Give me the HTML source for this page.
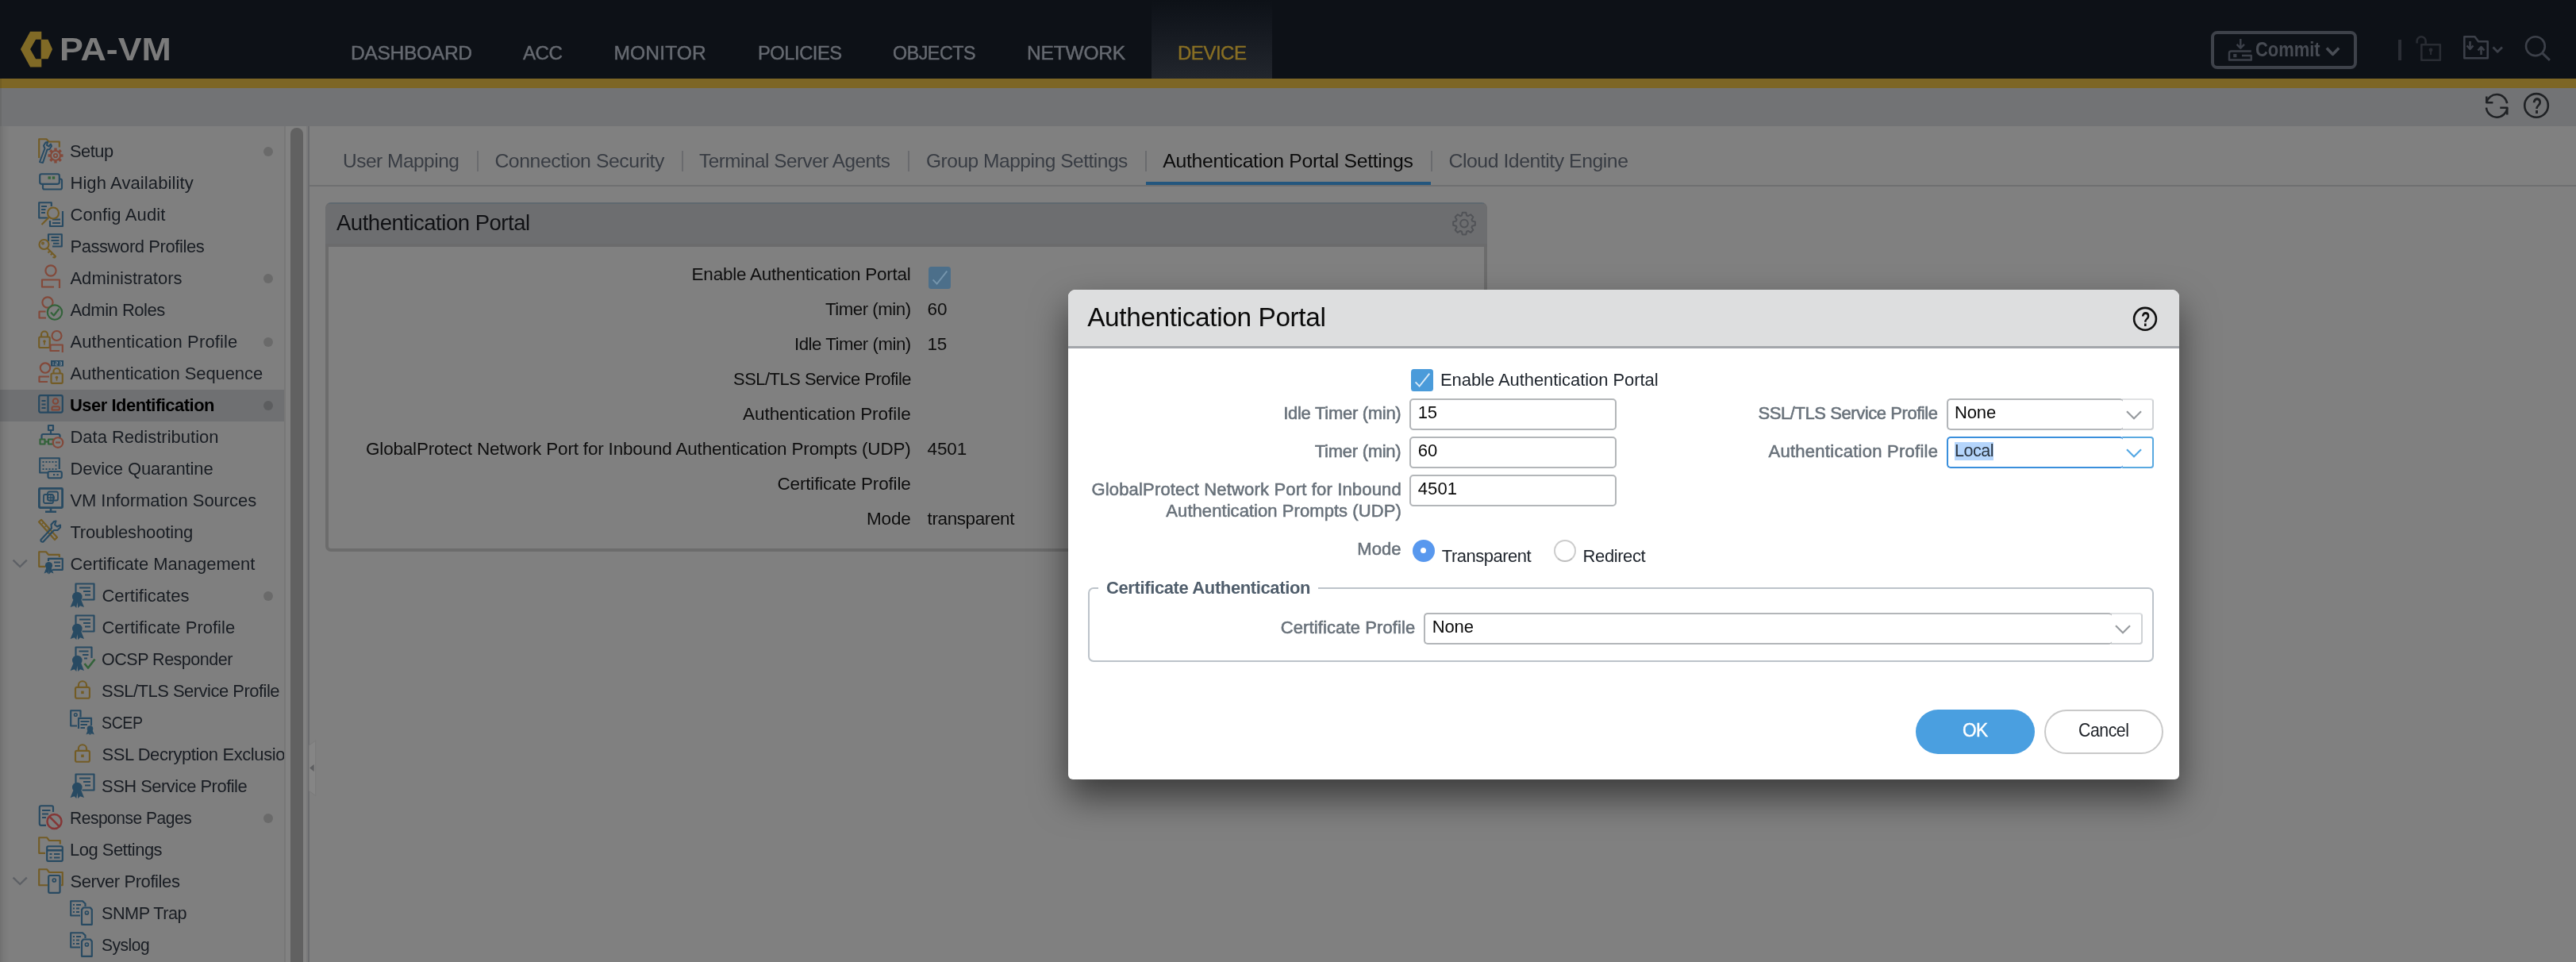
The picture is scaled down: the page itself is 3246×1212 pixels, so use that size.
<!DOCTYPE html>
<html><head><meta charset="utf-8"><title>PA-VM</title><style>
html,body{margin:0;padding:0}
body{width:3246px;height:1212px;position:relative;overflow:hidden;background:#808080;font-family:"Liberation Sans",sans-serif;}
.t{position:absolute;white-space:pre;}
.a{position:absolute;}
svg{position:absolute;overflow:visible}
#root{position:absolute;left:0;top:0;width:3246px;height:1212px;will-change:transform;}
</style></head><body>
<div id="root">
<div class="a" style="left:0px;top:0px;width:3246px;height:99px;background:#0d1117"></div>
<div class="a" style="left:1451px;top:0px;width:152px;height:99px;background:linear-gradient(#0d1117 0%,#14181f 35%,#22262d 100%)"></div>
<div class="a" style="left:0px;top:99px;width:3246px;height:12px;background:#7d6625"></div>
<div class="a" style="left:0px;top:111px;width:3246px;height:48px;background:#727375"></div>
<svg style="left:0;top:0" width="240" height="99"><g fill="#806a26"><polygon points="25.9,62.1 38.1,39.8 52.3,39.8 52.3,49.7 45.1,49.7 38.1,62.1 45.1,74.3 52.3,74.3 52.3,84.4 38.1,84.4"/><polygon points="51.6,49.7 60.5,49.7 66.1,62.1 60.5,74.3 51.6,74.3"/></g></svg>
<div class="t" style="left:75.30px;top:36px;font-size:40.5px;line-height:52px;color:#7b7b7b;font-weight:700;transform:scaleX(1.105);transform-origin:0 50%;">PA-VM</div>
<div class="t" style="left:441.90px;top:51px;font-size:24.6px;line-height:31px;color:#666a71;letter-spacing:-0.322px;-webkit-text-stroke:0.45px;">DASHBOARD</div>
<div class="t" style="left:659.40px;top:51px;font-size:24.6px;line-height:31px;color:#666a71;letter-spacing:-0.500px;transform:scaleX(0.9814);transform-origin:0 50%;-webkit-text-stroke:0.45px;">ACC</div>
<div class="t" style="left:773.50px;top:51px;font-size:24.6px;line-height:31px;color:#666a71;letter-spacing:0.116px;-webkit-text-stroke:0.45px;">MONITOR</div>
<div class="t" style="left:955.00px;top:51px;font-size:24.6px;line-height:31px;color:#666a71;letter-spacing:-0.500px;transform:scaleX(0.9648);transform-origin:0 50%;-webkit-text-stroke:0.45px;">POLICIES</div>
<div class="t" style="left:1125.00px;top:51px;font-size:24.6px;line-height:31px;color:#666a71;letter-spacing:-0.500px;transform:scaleX(0.9461);transform-origin:0 50%;-webkit-text-stroke:0.45px;">OBJECTS</div>
<div class="t" style="left:1294.00px;top:51px;font-size:24.6px;line-height:31px;color:#666a71;letter-spacing:-0.243px;-webkit-text-stroke:0.45px;">NETWORK</div>
<div class="t" style="left:1483.50px;top:51px;font-size:24.6px;line-height:31px;color:#886f24;letter-spacing:-0.500px;transform:scaleX(0.9765);transform-origin:0 50%;-webkit-text-stroke:0.45px;">DEVICE</div>
<div class="a" style="left:2786.2px;top:38.9px;width:183.9px;height:48.2px;box-sizing:border-box;border:4px solid #3e424a;border-radius:8px"></div>
<div class="t" style="left:2841.50px;top:46px;font-size:25.6px;line-height:32px;color:#474b53;font-weight:700;transform:scaleX(0.857);transform-origin:0 50%;">Commit</div>
<svg style="left:2806px;top:46px" width="36" height="34"><g fill="none" stroke="#3c4049" stroke-width="2.6" stroke-linejoin="round"><path d="M17.3,3 V14.5 M12.6,9.8 L17.3,14.7 L22,9.8" stroke-width="2.4"/><path d="M30.8,18.5 H5.5 a2.5,2.5 0 0 0 -2.5,2.5 V29.6 H30.8 V24 H19" stroke-width="2.5"/></g><rect x="8.2" y="22" width="4.2" height="4.2" fill="#3c4049"/></svg><svg style="left:2929px;top:58px" width="22" height="16"><g fill="none" stroke="#4a4e56" stroke-width="2.6" stroke-linejoin="round"><path d="M2.8,2.6 L10.5,10.4 L18.2,2.6" stroke-width="3.5"/></g></svg><div class="a" style="left:3022.2px;top:50px;width:3.8px;height:26px;background:#2b2e35"></div><svg style="left:3042px;top:43px" width="36" height="36"><g fill="none" stroke="#292c33" stroke-width="2.6" stroke-linejoin="round"><rect x="9.3" y="13.3" width="23.5" height="19.5"/><path d="M3.6,11.5 V8.8 a5.5,5.5 0 0 1 11,0 V13"/></g><circle cx="21" cy="20" r="2.4" fill="#292c33"/><rect x="20" y="20" width="2" height="6" fill="#292c33"/></svg><svg style="left:3102px;top:43px" width="56" height="36"><g fill="none" stroke="#3c4049" stroke-width="2.6" stroke-linejoin="round"><path d="M3.3,30.3 V3.3 H16.5 L21,9.3 H32.7 V30.3 Z"/><path d="M10.5,9 V18.5 M6.5,14.5 L10.5,18.8 L14.5,14.5 M24.5,26 V16.5 M20.5,20.5 L24.5,16.2 L28.5,20.5" stroke-width="2.5"/><path d="M39.5,16.5 L45.2,22.3 L51,16.5" stroke-width="2.8"/></g></svg><svg style="left:3180px;top:43px" width="36" height="36"><g fill="none" stroke="#3c4049" stroke-width="2.6" stroke-linejoin="round"><circle cx="14.9" cy="15.2" r="11.9"/><path d="M23.3,23.6 L32.9,32.8" stroke-width="3"/></g></svg><svg style="left:3129px;top:117px" width="34" height="34"><g fill="none" stroke="#1f2124" stroke-width="2.5" stroke-linejoin="round"><path d="M4.3,4.6 V12.3 H12.4"/><path d="M4.3,12.3 A13.2,13.2 0 0 1 30.2,13.2"/><path d="M21.3,18.7 H30.3 V27.5"/><path d="M30.3,18.7 A13.2,13.2 0 0 1 4.0,18.6"/></g></svg><svg style="left:3178px;top:115px" width="36" height="36"><g fill="none" stroke="#1f2124" stroke-width="2.6" stroke-linejoin="round"><circle cx="18.05" cy="17.9" r="14.8"/></g><text transform="translate(18.9,28) scale(0.71,1)" text-anchor="middle" font-family="Liberation Sans, sans-serif" font-weight="700" font-size="28.7" fill="#1f2124">?</text></svg>
<div class="a" style="left:0px;top:159px;width:358px;height:1053px;background:#7f7f7f"></div>
<div class="a" style="left:358px;top:159px;width:2px;height:1053px;background:#777"></div>
<div class="a" style="left:360px;top:159px;width:26px;height:1053px;background:#828282"></div>
<div class="a" style="left:386px;top:159px;width:2px;height:1053px;background:#7a7a7a"></div>
<div class="a" style="left:388px;top:159px;width:2px;height:1053px;background:#6b6c6f"></div>
<div class="a" style="left:366px;top:160.5px;width:16px;height:1070px;background:#616161;border-radius:8px"></div>
<svg style="left:388px;top:930px" width="12" height="76"><path d="M1.5,9 L9.8,3 V72.5 L1.5,66.5 Z" fill="#858585" stroke="#7a7a7a" stroke-width="1"/><polygon points="2.2,37.5 7.6,33 7.6,42" fill="#5e5f61"/></svg>
<div class="a" style="left:0px;top:491px;width:358px;height:40px;background:#6f7072"></div>
<div class="a" style="left:0;top:159px;width:358px;height:1053px;overflow:hidden">
<div class="t" style="left:88.40px;top:17px;font-size:22px;line-height:29px;color:#191d23;letter-spacing:-0.500px;transform:scaleX(0.9927);transform-origin:0 50%;">Setup</div>
<svg style="left:48px;top:15px" width="32" height="32" viewBox="0 0 32 32" opacity="0.86"><g fill="none" stroke="#725718" stroke-width="2.15" stroke-linejoin="round" stroke-linecap="butt"><path d="M1.2,25 V1.2 H10.5 L13.5,4.5 H26.8 V11.5"/></g><g fill="none" stroke="#1a425e" stroke-width="2" stroke-linejoin="round" stroke-linecap="butt"><path d="M2,30 L8.5,13 L7,9.5 L9.5,5.5 L12,5 L11,9 L13.5,10.5 L16,7.5 L17,10 L14.5,14 L11.5,14.5 L6,31 Z" /></g><g fill="none" stroke="#84402f" stroke-width="2.15" stroke-linejoin="round" stroke-linecap="butt"><circle cx="22" cy="22" r="6"/><circle cx="22" cy="22" r="2.2" stroke-width="1.8"/><path d="M22,12.5 V15.5 M22,28.5 V31.5 M12.5,22 H15.5 M28.5,22 H31.5 M15.3,15.3 L17.4,17.4 M26.6,26.6 L28.7,28.7 M15.3,28.7 L17.4,26.6 M26.6,17.4 L28.7,15.3" stroke-width="3.4"/></g></svg>
<div class="a" style="left:332px;top:26.19999999999999px;width:12px;height:12px;border-radius:6px;background:rgba(0,0,0,.165)"></div>
<div class="t" style="left:88.40px;top:57px;font-size:22px;line-height:29px;color:#191d23;letter-spacing:0.101px;">High Availability</div>
<svg style="left:48px;top:55px" width="32" height="32" viewBox="0 0 32 32" opacity="0.86"><g fill="none" stroke="#1a425e" stroke-width="2.15" stroke-linejoin="round" stroke-linecap="butt"><path d="M27,11.5 H28 a2,2 0 0 1 2,2 V22.5 a2,2 0 0 1 -2,2 H8 a2,2 0 0 1 -2,-2 V18"/><rect x="2.2" y="5.2" width="24.6" height="12.6" rx="2.2"/></g><rect x="12.5" y="8.3" width="3.4" height="3.4" fill="#275e2f"/><rect x="17.8" y="8.3" width="3.4" height="3.4" fill="#275e2f"/></svg>
<div class="t" style="left:88.40px;top:97px;font-size:22px;line-height:29px;color:#191d23;letter-spacing:0.122px;">Config Audit</div>
<svg style="left:48px;top:95px" width="32" height="32" viewBox="0 0 32 32" opacity="0.86"><g fill="none" stroke="#1a425e" stroke-width="2.15" stroke-linejoin="round" stroke-linecap="butt"><path d="M12,20.5 H1.2 V1.2 H16.8 V6"/><path d="M4,6 H11 M4,10 H9.5 M4,14 H9" stroke-width="2"/><path d="M31,12 V31 H15 V24"/><path d="M18,22.5 H28 M18,27 H28" stroke-width="2"/></g><g fill="none" stroke="#725718" stroke-width="2.15" stroke-linejoin="round" stroke-linecap="butt"><circle cx="19" cy="14.5" r="7"/><path d="M14,19.5 L4.5,29"/></g></svg>
<div class="t" style="left:88.40px;top:137px;font-size:22px;line-height:29px;color:#191d23;letter-spacing:-0.422px;">Password Profiles</div>
<svg style="left:48px;top:135px" width="32" height="32" viewBox="0 0 32 32" opacity="0.86"><g fill="none" stroke="#1a425e" stroke-width="2.15" stroke-linejoin="round" stroke-linecap="butt"><path d="M13,10 V1.2 H29.8 V16.5 H18"/><path d="M16.5,5 H26.5 M16.5,9 H26.5 M19,12.8 H26.5" stroke-width="2"/></g><g fill="none" stroke="#725718" stroke-width="2.15" stroke-linejoin="round" stroke-linecap="butt"><circle cx="7.5" cy="14" r="6"/><circle cx="6" cy="12.5" r="1.2" stroke-width="1.6"/><path d="M11.5,18.5 L22,29 L21,30.5 L18.5,30 M15,22 L12.5,24.5 M18,25 L15.8,27.2"/></g></svg>
<div class="t" style="left:88.40px;top:177px;font-size:22px;line-height:29px;color:#191d23;letter-spacing:0.043px;">Administrators</div>
<svg style="left:48px;top:173px" width="32" height="32" viewBox="0 0 32 32" opacity="0.86"><g fill="none" stroke="#84402f" stroke-width="2.15" stroke-linejoin="round" stroke-linecap="butt"><circle cx="16" cy="9" r="6.6"/><path d="M20,29.5 H5 V20.5 H27 V31"/></g></svg>
<div class="a" style="left:332px;top:186.2px;width:12px;height:12px;border-radius:6px;background:rgba(0,0,0,.165)"></div>
<div class="t" style="left:88.40px;top:217px;font-size:22px;line-height:29px;color:#191d23;letter-spacing:-0.484px;">Admin Roles</div>
<svg style="left:48px;top:213px" width="32" height="32" viewBox="0 0 32 32" opacity="0.86"><g fill="none" stroke="#84402f" stroke-width="2.15" stroke-linejoin="round" stroke-linecap="butt"><circle cx="12" cy="9" r="6.6"/><path d="M10,28.5 H1.5 V20.5 H9.5"/></g><g fill="none" stroke="#275e2f" stroke-width="2.15" stroke-linejoin="round" stroke-linecap="butt"><circle cx="21" cy="21.5" r="9.2"/><path d="M16,21.5 L19.8,25.5 L26.5,17"/></g></svg>
<div class="t" style="left:88.40px;top:257px;font-size:22px;line-height:29px;color:#191d23;letter-spacing:0.145px;">Authentication Profile</div>
<svg style="left:48px;top:255px" width="32" height="32" viewBox="0 0 32 32" opacity="0.86"><g fill="none" stroke="#725718" stroke-width="2.15" stroke-linejoin="round" stroke-linecap="butt"><rect x="1.2" y="10.5" width="13.5" height="13.5" rx="1.5"/><path d="M4,10.5 V7.5 a4,4 0 0 1 8,0 V10.5"/></g><circle cx="8" cy="16" r="1.8" fill="#725718"/><rect x="7.2" y="16" width="1.6" height="4.5" fill="#725718"/><g fill="none" stroke="#84402f" stroke-width="2.15" stroke-linejoin="round" stroke-linecap="butt"><circle cx="23.5" cy="9" r="6"/><path d="M27,28 H15.5 V20.5 H30.8 V30"/></g></svg>
<div class="a" style="left:332px;top:266.2px;width:12px;height:12px;border-radius:6px;background:rgba(0,0,0,.165)"></div>
<div class="t" style="left:88.40px;top:297px;font-size:22px;line-height:29px;color:#191d23;letter-spacing:-0.084px;">Authentication Sequence</div>
<svg style="left:48px;top:293.3px" width="32" height="32" viewBox="0 0 32 32" opacity="0.86"><g fill="none" stroke="#84402f" stroke-width="2.15" stroke-linejoin="round" stroke-linecap="butt"><circle cx="9" cy="11.5" r="6.2"/><path d="M12,29 H1.5 V22.5 H14"/></g><rect x="16" y="2" width="16" height="7.5" fill="#1a425e"/><path d="M19,4 V8 M22,4 H24.5 V6 H22 V8 H24.5 M27,4 H29.5 V8 H27 M27,6 H29.5" stroke="#7f8b95" stroke-width="1" fill="none"/><g fill="none" stroke="#725718" stroke-width="2.15" stroke-linejoin="round" stroke-linecap="butt"><rect x="16.5" y="18.5" width="14.3" height="12.3" rx="1.5"/><path d="M19.5,18.5 V16 a4,4 0 0 1 8,0 V18.5"/></g><circle cx="23.5" cy="23.5" r="1.8" fill="#725718"/><rect x="22.7" y="23.5" width="1.6" height="4.2" fill="#725718"/></svg>
<div class="t" style="left:88.40px;top:337px;font-size:22px;line-height:29px;color:#000;font-weight:700;letter-spacing:-0.500px;transform:scaleX(0.9977);transform-origin:0 50%;">User Identification</div>
<svg style="left:48px;top:335px" width="32" height="32" viewBox="0 0 32 32" opacity="0.86"><g fill="none" stroke="#1a425e" stroke-width="2.15" stroke-linejoin="round" stroke-linecap="butt"><rect x="1.2" y="4.2" width="29.6" height="21.4" rx="2"/><path d="M12.5,4.2 V25.6"/><path d="M4.5,11 H9.5 M4.5,15.5 H9.5 M4.5,20 H9.5" stroke-width="2"/></g><g fill="none" stroke="#84402f" stroke-width="2" stroke-linejoin="round" stroke-linecap="butt"><circle cx="22" cy="11.5" r="3.3"/><path d="M17.5,22.5 H25 a2,2 0 0 0 0,-4.2 H19.5 a2,2 0 0 0 -2,2 Z" /></g></svg>
<div class="a" style="left:332px;top:346.2px;width:12px;height:12px;border-radius:6px;background:rgba(0,0,0,.165)"></div>
<div class="t" style="left:88.40px;top:377px;font-size:22px;line-height:29px;color:#191d23;">Data Redistribution</div>
<svg style="left:48px;top:375px" width="32" height="32" viewBox="0 0 32 32" opacity="0.86"><g fill="none" stroke="#1a425e" stroke-width="2.15" stroke-linejoin="round" stroke-linecap="butt"><rect x="13" y="2" width="6" height="6"/><path d="M16,8 V13 M4.5,19 V15 a2,2 0 0 1 2,-2 H25.5 a2,2 0 0 1 2,2 V17"/></g><g fill="none" stroke="#275e2f" stroke-width="2.15" stroke-linejoin="round" stroke-linecap="butt"><rect x="2.5" y="19.5" width="6" height="6"/><rect x="13" y="19.5" width="6" height="6"/><path d="M8.5,22.5 H13"/></g><g fill="none" stroke="#84402f" stroke-width="2.15" stroke-linejoin="round" stroke-linecap="butt"><circle cx="25" cy="23.5" r="6.3"/><path d="M22,23.5 H28"/></g></svg>
<div class="t" style="left:88.40px;top:417px;font-size:22px;line-height:29px;color:#191d23;letter-spacing:-0.119px;">Device Quarantine</div>
<svg style="left:48px;top:415px" width="32" height="32" viewBox="0 0 32 32" opacity="0.86"><g fill="none" stroke="#1a425e" stroke-width="2.15" stroke-linejoin="round" stroke-linecap="butt"><path d="M12,21.5 H2.2 V3.2 H26.8 V17"/><rect x="12.5" y="20" width="17.3" height="8.2" rx="2"/></g><g fill="#1a425e"><rect x="5.5" y="7" width="2" height="2"/><rect x="9.5" y="7" width="2" height="2"/><rect x="13.5" y="7" width="2" height="2"/><rect x="17.5" y="7" width="2" height="2"/><rect x="21.5" y="7" width="2" height="2"/><rect x="5.5" y="11.5" width="2" height="2"/><rect x="21.5" y="11.5" width="2" height="2"/><rect x="5.5" y="16" width="2" height="2"/><rect x="9.5" y="16" width="2" height="2"/><rect x="13.5" y="16" width="2" height="2"/><rect x="17.5" y="16" width="2" height="2"/><rect x="21.5" y="16" width="2" height="2"/><rect x="19" y="23" width="2.2" height="2.2"/><rect x="23.5" y="23" width="2.2" height="2.2"/></g></svg>
<div class="t" style="left:88.40px;top:457px;font-size:22px;line-height:29px;color:#191d23;letter-spacing:-0.058px;">VM Information Sources</div>
<svg style="left:48px;top:455px" width="32" height="32" viewBox="0 0 32 32" opacity="0.86"><g fill="none" stroke="#1a425e" stroke-width="2.15" stroke-linejoin="round" stroke-linecap="butt"><rect x="1.4" y="1.4" width="29.2" height="24.2" rx="1" stroke-width="2.8"/><path d="M16,26 V30.5 M9,30.8 H23" stroke-width="2.6"/><rect x="7" y="9" width="12" height="11" rx="2" stroke-width="1.8"/><rect x="12" y="5.5" width="13" height="11" rx="2" stroke-width="1.8"/><circle cx="16" cy="13" r="4.2" stroke-width="1.6"/><path d="M16,8.8 V17.2 M11.8,13 H20.2" stroke-width="1.4"/></g></svg>
<div class="t" style="left:88.40px;top:497px;font-size:22px;line-height:29px;color:#191d23;letter-spacing:-0.151px;">Troubleshooting</div>
<svg style="left:48px;top:495px" width="32" height="32" viewBox="0 0 32 32" opacity="0.86"><g fill="none" stroke="#725718" stroke-width="2.15" stroke-linejoin="round" stroke-linecap="butt"><path d="M1,3.5 L4,0.8 L24,23 L21,26 Z"/><path d="M5,6 L7,4 M8.5,10 L10.5,8 M12,14 L14,12 M15.5,18 L17.5,16" stroke-width="1.4"/></g><g fill="none" stroke="#1a425e" stroke-width="2.1" stroke-linejoin="round" stroke-linecap="butt"><path d="M3.5,26 L17,11.5 L16.5,7 L20,3 L22.5,2.5 L21,7 L24,9.5 L28,7.5 L28,10.5 L24.5,14 L20,14 L6.5,28.5 a2.1,2.1 0 0 1 -3,-2.5 Z"/></g></svg>
<div class="t" style="left:88.40px;top:537px;font-size:22px;line-height:29px;color:#191d23;letter-spacing:-0.030px;">Certificate Management</div>
<svg style="left:48px;top:535px" width="32" height="32" viewBox="0 0 32 32" opacity="0.86"><g fill="none" stroke="#725718" stroke-width="2.15" stroke-linejoin="round" stroke-linecap="butt"><path d="M9,19.8 H1.2 V1.2 H10 L13,4.8 H26.8 V8"/></g><g fill="none" stroke="#1a425e" stroke-width="2.15" stroke-linejoin="round" stroke-linecap="butt"><path d="M13,13 V9.8 H30.8 V23.8 H18"/><path d="M20,14.5 H28 M21,19 H28" stroke-width="2"/></g><circle cx="13.5" cy="18.5" r="4.6" fill="#1a425e"/><path d="M10.5,21 L7.5,28.5 L11,27 L13.3,29.5 L13.5,23 L13.8,29.5 L16,27 L19.5,28.5 L16.5,21 Z" fill="#1a425e"/></svg>
<div class="t" style="left:128.40px;top:577px;font-size:22px;line-height:29px;color:#191d23;">Certificates</div>
<svg style="left:88px;top:575px" width="32" height="32" viewBox="0 0 32 32" opacity="0.86"><g fill="none" stroke="#1a425e" stroke-width="2.15" stroke-linejoin="round" stroke-linecap="butt"><path d="M7.5,13 V1.5 H30.5 V21.5 H15.5"/><path d="M12,6.5 H26 M17,11 H26 M19,15.5 H26" stroke-width="2.2"/></g><circle cx="9.3" cy="18" r="6.3" fill="#1a425e"/><path d="M4.5,21.5 L0.6,31 L5.6,29.3 L8.3,32 L9.3,25 L10.3,32 L13,29.3 L18,31 L14.2,21.5 Z" fill="#1a425e"/></svg>
<div class="a" style="left:332px;top:586.2px;width:12px;height:12px;border-radius:6px;background:rgba(0,0,0,.165)"></div>
<div class="t" style="left:128.40px;top:617px;font-size:22px;line-height:29px;color:#191d23;letter-spacing:0.015px;">Certificate Profile</div>
<svg style="left:88px;top:615px" width="32" height="32" viewBox="0 0 32 32" opacity="0.86"><g fill="none" stroke="#1a425e" stroke-width="2.15" stroke-linejoin="round" stroke-linecap="butt"><path d="M7.5,13 V1.5 H30.5 V21.5 H15.5"/><path d="M12,6.5 H26 M17,11 H26 M19,15.5 H26" stroke-width="2.2"/></g><circle cx="9.3" cy="18" r="6.3" fill="#1a425e"/><path d="M4.5,21.5 L0.6,31 L5.6,29.3 L8.3,32 L9.3,25 L10.3,32 L13,29.3 L18,31 L14.2,21.5 Z" fill="#1a425e"/></svg>
<div class="t" style="left:128.40px;top:657px;font-size:22px;line-height:29px;color:#191d23;letter-spacing:-0.500px;transform:scaleX(0.9775);transform-origin:0 50%;">OCSP Responder</div>
<svg style="left:88px;top:655px" width="32" height="32" viewBox="0 0 32 32" opacity="0.86"><g fill="none" stroke="#1a425e" stroke-width="2.15" stroke-linejoin="round" stroke-linecap="butt"><path d="M7.5,13 V1.5 H27.5 V15"/><path d="M11.5,6.5 H23.5 M16,11 H23.5 M18,15.5 H22" stroke-width="2.2"/></g><circle cx="9.3" cy="18" r="6.3" fill="#1a425e"/><path d="M4.5,21.5 L0.6,31 L5.6,29.3 L8.3,32 L9.3,25 L10.3,32 L13,29.3 L18,31 L14.2,21.5 Z" fill="#1a425e"/><g fill="none" stroke="#275e2f" stroke-width="2.6" stroke-linejoin="round" stroke-linecap="butt"><path d="M18.5,22 L23,27.5 L31.5,16.5"/></g></svg>
<div class="t" style="left:128.40px;top:697px;font-size:22px;line-height:29px;color:#191d23;letter-spacing:-0.500px;transform:scaleX(0.9978);transform-origin:0 50%;">SSL/TLS Service Profile</div>
<svg style="left:88px;top:695px" width="32" height="32" viewBox="0 0 32 32" opacity="0.86"><g fill="none" stroke="#725718" stroke-width="2.15" stroke-linejoin="round" stroke-linecap="butt"><rect x="7" y="11.8" width="17.9" height="13.9" rx="2"/><path d="M10.9,11.8 V9.3 a5.05,5.05 0 0 1 10.1,0 V11.8"/></g><rect x="14.2" y="16.6" width="3.5" height="3.5" fill="#725718"/></svg>
<div class="t" style="left:128.40px;top:737px;font-size:22px;line-height:29px;color:#191d23;letter-spacing:-0.500px;transform:scaleX(0.8909);transform-origin:0 50%;">SCEP</div>
<svg style="left:88px;top:735px" width="32" height="32" viewBox="0 0 32 32" opacity="0.86"><g fill="none" stroke="#1a425e" stroke-width="2.15" stroke-linejoin="round" stroke-linecap="butt"><path d="M9,20.5 H1.2 V1.2 H13.5 V9.5"/><circle cx="7.3" cy="6.5" r="1.8" stroke-width="1.6"/><path d="M11,24 V10.8 H27 V20"/><path d="M13.5,15 H24.5 M13.5,19 H22 M13.5,23 H19" stroke-width="2"/></g><circle cx="25.5" cy="24" r="3.8" fill="#1a425e"/><path d="M22.5,26 L20.5,31.5 L23.5,30.3 L25.3,32 L25.5,27 L25.7,32 L27.5,30.3 L30.8,31.5 L28.5,26 Z" fill="#1a425e"/></svg>
<div class="t" style="left:128.40px;top:777px;font-size:22px;line-height:29px;color:#191d23;letter-spacing:-0.409px;">SSL Decryption Exclusion</div>
<svg style="left:88px;top:775px" width="32" height="32" viewBox="0 0 32 32" opacity="0.86"><g fill="none" stroke="#725718" stroke-width="2.15" stroke-linejoin="round" stroke-linecap="butt"><rect x="7" y="11.8" width="17.9" height="13.9" rx="2"/><path d="M10.9,11.8 V9.3 a5.05,5.05 0 0 1 10.1,0 V11.8"/></g><rect x="14.2" y="16.6" width="3.5" height="3.5" fill="#725718"/></svg>
<div class="t" style="left:128.40px;top:817px;font-size:22px;line-height:29px;color:#191d23;letter-spacing:-0.500px;transform:scaleX(0.9973);transform-origin:0 50%;">SSH Service Profile</div>
<svg style="left:88px;top:815px" width="32" height="32" viewBox="0 0 32 32" opacity="0.86"><g fill="none" stroke="#1a425e" stroke-width="2.15" stroke-linejoin="round" stroke-linecap="butt"><path d="M7.5,13 V1.5 H30.5 V21.5 H15.5"/><path d="M12,6.5 H26 M17,11 H26 M19,15.5 H26" stroke-width="2.2"/></g><circle cx="9.3" cy="18" r="6.3" fill="#1a425e"/><path d="M4.5,21.5 L0.6,31 L5.6,29.3 L8.3,32 L9.3,25 L10.3,32 L13,29.3 L18,31 L14.2,21.5 Z" fill="#1a425e"/></svg>
<div class="t" style="left:88.40px;top:857px;font-size:22px;line-height:29px;color:#191d23;letter-spacing:-0.500px;transform:scaleX(0.9541);transform-origin:0 50%;">Response Pages</div>
<svg style="left:48px;top:855px" width="32" height="32" viewBox="0 0 32 32" opacity="0.86"><g fill="none" stroke="#1a425e" stroke-width="2.15" stroke-linejoin="round" stroke-linecap="butt"><path d="M10,25.8 H3.8 a2,2 0 0 1 -2,-2 V3.2 a2,2 0 0 1 2,-2 H17 a2,2 0 0 1 2,2 V9"/><path d="M5,7 H15.5 M5,11.5 H13 M5,16 H10" stroke-width="2"/></g><g fill="none" stroke="#852b2b" stroke-width="2.5" stroke-linejoin="round" stroke-linecap="butt"><circle cx="20.5" cy="21" r="9"/><path d="M14.2,14.7 L26.8,27.3"/></g></svg>
<div class="a" style="left:332px;top:866.2px;width:12px;height:12px;border-radius:6px;background:rgba(0,0,0,.165)"></div>
<div class="t" style="left:88.40px;top:897px;font-size:22px;line-height:29px;color:#191d23;letter-spacing:-0.500px;transform:scaleX(0.9982);transform-origin:0 50%;">Log Settings</div>
<svg style="left:48px;top:895px" width="32" height="32" viewBox="0 0 32 32" opacity="0.86"><g fill="none" stroke="#725718" stroke-width="2.15" stroke-linejoin="round" stroke-linecap="butt"><path d="M9,20.8 H1.2 V1.2 H11 L14,5 H27.8 V9.5"/></g><g fill="none" stroke="#1a425e" stroke-width="2.15" stroke-linejoin="round" stroke-linecap="butt"><rect x="11.2" y="12.2" width="19.6" height="18.6" rx="1.5"/><path d="M11.2,17.3 H30.8" stroke-width="2.6"/><path d="M14.5,22 H17.5 M20,22 H27.5 M14.5,26.5 H17.5 M20,26.5 H27.5" stroke-width="2"/></g></svg>
<div class="t" style="left:88.40px;top:937px;font-size:22px;line-height:29px;color:#191d23;letter-spacing:-0.412px;">Server Profiles</div>
<svg style="left:48px;top:935px" width="32" height="32" viewBox="0 0 32 32" opacity="0.86"><g fill="none" stroke="#725718" stroke-width="2.15" stroke-linejoin="round" stroke-linecap="butt"><path d="M12,21.2 H1.2 V1.2 H11 L14,5 H30.8 V21.2 H29"/></g><g fill="none" stroke="#1a425e" stroke-width="2.15" stroke-linejoin="round" stroke-linecap="butt"><rect x="13.2" y="9" width="14.3" height="21.8" rx="1.5" fill="#7f7f7f"/><circle cx="20.3" cy="15" r="2" stroke-width="1.7"/></g></svg>
<div class="t" style="left:128.40px;top:977px;font-size:22px;line-height:29px;color:#191d23;letter-spacing:-0.500px;transform:scaleX(0.9843);transform-origin:0 50%;">SNMP Trap</div>
<svg style="left:88px;top:975px" width="32" height="32" viewBox="0 0 32 32" opacity="0.86"><g fill="none" stroke="#1a425e" stroke-width="2.15" stroke-linejoin="round" stroke-linecap="butt"><path d="M13,19.5 H1.2 V1.2 H16 L19.5,4.5 V8"/><path d="M4,6 H6 M8,6 H14 M4,10.5 H6 M8,10.5 H12 M4,15 H6 M8,15 H12" stroke-width="1.9"/><path d="M15,30.8 V12 L17,9.5 H25.8 L27.8,12 V30.8 Z"/><circle cx="21.4" cy="16" r="2" stroke-width="1.7"/></g></svg>
<div class="t" style="left:128.40px;top:1017px;font-size:22px;line-height:29px;color:#191d23;letter-spacing:-0.500px;transform:scaleX(0.9548);transform-origin:0 50%;">Syslog</div>
<svg style="left:88px;top:1015px" width="32" height="32" viewBox="0 0 32 32" opacity="0.86"><g fill="none" stroke="#1a425e" stroke-width="2.15" stroke-linejoin="round" stroke-linecap="butt"><path d="M13,19.5 H1.2 V1.2 H16 L19.5,4.5 V8"/><path d="M4,6 H6 M8,6 H14 M4,10.5 H6 M8,10.5 H12 M4,15 H6 M8,15 H12" stroke-width="1.9"/><path d="M15,30.8 V12 L17,9.5 H25.8 L27.8,12 V30.8 Z"/><circle cx="21.4" cy="16" r="2" stroke-width="1.7"/></g></svg>
<svg style="left:15px;top:543px" width="20" height="16"><path d="M1.6,3.6 L10.2,12 L18.8,3.6" fill="none" stroke="#5d6065" stroke-width="2.3"/></svg>
<svg style="left:15px;top:943px" width="20" height="16"><path d="M1.6,3.6 L10.2,12 L18.8,3.6" fill="none" stroke="#5d6065" stroke-width="2.3"/></svg>
</div>
<div class="a" style="left:390px;top:233px;width:2856px;height:2px;background:#6e6f70"></div>
<div class="t" style="left:432.40px;top:187px;font-size:24.8px;line-height:31px;color:#383c43;letter-spacing:-0.500px;transform:scaleX(0.9867);transform-origin:0 50%;">User Mapping</div>
<div class="t" style="left:623.40px;top:187px;font-size:24.8px;line-height:31px;color:#383c43;letter-spacing:-0.438px;">Connection Security</div>
<div class="t" style="left:881.00px;top:187px;font-size:24.8px;line-height:31px;color:#383c43;letter-spacing:-0.500px;transform:scaleX(0.9802);transform-origin:0 50%;">Terminal Server Agents</div>
<div class="t" style="left:1166.80px;top:187px;font-size:24.8px;line-height:31px;color:#383c43;letter-spacing:-0.500px;transform:scaleX(0.9902);transform-origin:0 50%;">Group Mapping Settings</div>
<div class="t" style="left:1465.30px;top:187px;font-size:24.8px;line-height:31px;color:#0b0b0b;letter-spacing:-0.338px;">Authentication Portal Settings</div>
<div class="t" style="left:1825.50px;top:187px;font-size:24.8px;line-height:31px;color:#383c43;letter-spacing:-0.464px;">Cloud Identity Engine</div>
<div class="a" style="left:600.9px;top:190.4px;width:2.2px;height:25.4px;background:#6a6b6e"></div>
<div class="a" style="left:858.9px;top:190.4px;width:2.2px;height:25.4px;background:#6a6b6e"></div>
<div class="a" style="left:1144.1000000000001px;top:190.4px;width:2.2px;height:25.4px;background:#6a6b6e"></div>
<div class="a" style="left:1442.9px;top:190.4px;width:2.2px;height:25.4px;background:#6a6b6e"></div>
<div class="a" style="left:1802.5px;top:190.4px;width:2.2px;height:25.4px;background:#6a6b6e"></div>
<div class="a" style="left:1444px;top:229px;width:359px;height:4px;background:#23567e"></div>
<div class="a" style="left:410.2px;top:255px;width:1463.6px;height:439.7px;box-sizing:border-box;border:4px solid #6c6c6c;border-top:2px solid #5f686f;border-radius:7px;background:#808080"></div>
<div class="a" style="left:410.2px;top:257px;width:1463.6px;height:54px;background:#6d6e70;border-radius:6px 6px 0 0;box-sizing:border-box;border-bottom:4px solid #6b6b6c"></div>
<div class="t" style="left:424.40px;top:263px;font-size:27.6px;line-height:35px;color:#101114;letter-spacing:-0.500px;transform:scaleX(0.9978);transform-origin:0 50%;">Authentication Portal</div>
<div class="t" style="left:871.60px;top:331px;font-size:22.5px;line-height:29px;color:#0e0e0e;letter-spacing:-0.239px;">Enable Authentication Portal</div>
<div class="t" style="left:1040.00px;top:375px;font-size:22.5px;line-height:29px;color:#0e0e0e;letter-spacing:-0.500px;transform:scaleX(0.9903);transform-origin:0 50%;">Timer (min)</div>
<div class="t" style="left:1168.60px;top:375px;font-size:22.5px;line-height:29px;color:#0e0e0e;letter-spacing:-0.116px;">60</div>
<div class="t" style="left:1000.90px;top:419px;font-size:22.5px;line-height:29px;color:#0e0e0e;letter-spacing:-0.500px;transform:scaleX(0.9893);transform-origin:0 50%;">Idle Timer (min)</div>
<div class="t" style="left:1168.60px;top:419px;font-size:22.5px;line-height:29px;color:#0e0e0e;letter-spacing:-0.416px;">15</div>
<div class="t" style="left:923.60px;top:463px;font-size:22.5px;line-height:29px;color:#0e0e0e;letter-spacing:-0.500px;transform:scaleX(0.9745);transform-origin:0 50%;">SSL/TLS Service Profile</div>
<div class="t" style="left:936.00px;top:507px;font-size:22.5px;line-height:29px;color:#0e0e0e;letter-spacing:-0.047px;">Authentication Profile</div>
<div class="t" style="left:461.00px;top:551px;font-size:22.5px;line-height:29px;color:#0e0e0e;letter-spacing:-0.186px;">GlobalProtect Network Port for Inbound Authentication Prompts (UDP)</div>
<div class="t" style="left:1168.60px;top:551px;font-size:22.5px;line-height:29px;color:#0e0e0e;letter-spacing:-0.166px;">4501</div>
<div class="t" style="left:979.50px;top:595px;font-size:22.5px;line-height:29px;color:#0e0e0e;letter-spacing:-0.169px;">Certificate Profile</div>
<div class="t" style="left:1092.00px;top:639px;font-size:22.5px;line-height:29px;color:#0e0e0e;letter-spacing:-0.174px;">Mode</div>
<div class="t" style="left:1168.60px;top:639px;font-size:22.5px;line-height:29px;color:#0e0e0e;letter-spacing:-0.403px;">transparent</div>
<div class="a" style="left:1170px;top:336px;width:28px;height:28px;background:#4c6f8a;border-radius:3.5px"></div>
<svg style="left:1170px;top:336px" width="29" height="28"><path d="M5.6,16.4 L10.6,21.6 L23.3,5.6" fill="none" stroke="#7696ad" stroke-width="1.9"/></svg>
<svg style="left:1828px;top:265px" width="34" height="34"><path d="M13.87,6.47 L14.77,2.78 L19.23,2.78 L20.13,6.47 L21.95,7.22 L25.20,5.25 L28.35,8.40 L26.38,11.65 L27.13,13.47 L30.82,14.37 L30.82,18.83 L27.13,19.73 L26.38,21.55 L28.35,24.80 L25.20,27.95 L21.95,25.98 L20.13,26.73 L19.23,30.42 L14.77,30.42 L13.87,26.73 L12.05,25.98 L8.80,27.95 L5.65,24.80 L7.62,21.55 L6.87,19.73 L3.18,18.83 L3.18,14.37 L6.87,13.47 L7.62,11.65 L5.65,8.40 L8.80,5.25 L12.05,7.22 Z" fill="none" stroke="#515357" stroke-width="2" stroke-linejoin="round"/><circle cx="17" cy="16.6" r="4.8" fill="none" stroke="#515357" stroke-width="2"/></svg>
<div class="a" style="left:0px;top:159px;width:12px;height:1053px;background:linear-gradient(90deg,rgba(0,0,0,.12) 0,rgba(0,0,0,.05) 4px,rgba(0,0,0,0) 11px)"></div>
<div class="a" style="left:0px;top:99px;width:2px;height:60px;background:rgba(0,0,0,.08)"></div>
<div class="a" style="left:1346px;top:364.5px;width:1400px;height:617.5px;background:#fff;border-radius:9px 9px 6px 6px;box-shadow:0 22px 46px 0 rgba(0,0,0,.55)"></div>
<div class="a" style="left:1346px;top:364.5px;width:1400px;height:72.5px;background:#dddedf;border-radius:9px 9px 0 0"></div>
<div class="a" style="left:1346px;top:436px;width:1400px;height:3px;background:#a3a6ab"></div>
<div class="t" style="left:1370.20px;top:378px;font-size:33.4px;line-height:43px;color:#0a0a0a;letter-spacing:-0.373px;">Authentication Portal</div>
<svg style="left:2685px;top:384px" width="36" height="36"><circle cx="18" cy="17.8" r="13.9" fill="none" stroke="#111" stroke-width="2.6"/><text transform="translate(18.6,27.2) scale(0.7,1)" text-anchor="middle" font-family="Liberation Sans, sans-serif" font-weight="700" font-size="26.7" fill="#111">?</text></svg>
<div class="a" style="left:1777.8px;top:464.8px;width:28.4px;height:28.4px;background:#4a9bda;border-radius:3.5px"></div>
<svg style="left:1777.8px;top:464.8px" width="29" height="29"><path d="M5.6,16.4 L10.6,21.6 L23.3,5.6" fill="none" stroke="#d8eaf8" stroke-width="1.9"/></svg>
<div class="t" style="left:1815.00px;top:464px;font-size:22px;line-height:29px;color:#20262e;letter-spacing:-0.069px;">Enable Authentication Portal</div>
<div class="t" style="left:1617.21px;top:506px;font-size:22px;line-height:29px;color:#68717a;letter-spacing:-0.287px;-webkit-text-stroke:0.55px #68717a;">Idle Timer (min)</div>
<div class="a" style="left:1776px;top:502px;width:261px;height:40px;box-sizing:border-box;border:2px solid #b3b6b9;border-radius:5px;background:#fff"></div>
<div class="t" style="left:1786.70px;top:505px;font-size:22px;line-height:29px;color:#0a0a0a;letter-spacing:-0.242px;">15</div>
<div class="t" style="left:1656.73px;top:554px;font-size:22px;line-height:29px;color:#68717a;letter-spacing:-0.266px;-webkit-text-stroke:0.55px #68717a;">Timer (min)</div>
<div class="a" style="left:1776px;top:550px;width:261px;height:40px;box-sizing:border-box;border:2px solid #b3b6b9;border-radius:5px;background:#fff"></div>
<div class="t" style="left:1786.70px;top:553px;font-size:22px;line-height:29px;color:#0a0a0a;letter-spacing:0.058px;">60</div>
<div class="t" style="left:1375.47px;top:602px;font-size:22px;line-height:29px;color:#68717a;letter-spacing:0.169px;-webkit-text-stroke:0.55px #68717a;">GlobalProtect Network Port for Inbound</div>
<div class="t" style="left:1469.36px;top:629px;font-size:22px;line-height:29px;color:#68717a;letter-spacing:0.062px;-webkit-text-stroke:0.55px #68717a;">Authentication Prompts (UDP)</div>
<div class="a" style="left:1776px;top:598px;width:261px;height:40px;box-sizing:border-box;border:2px solid #b3b6b9;border-radius:5px;background:#fff"></div>
<div class="t" style="left:1786.70px;top:601px;font-size:22px;line-height:29px;color:#0a0a0a;letter-spacing:0.137px;">4501</div>
<div class="t" style="left:1710.26px;top:677px;font-size:22px;line-height:29px;color:#68717a;letter-spacing:0.063px;-webkit-text-stroke:0.55px #68717a;">Mode</div>
<div class="a" style="left:1779.8px;top:679.9px;width:28.2px;height:28px;box-sizing:border-box;border-radius:50%;background:#5898ee;"></div>
<div class="a" style="left:1790.2px;top:690.2px;width:7.2px;height:7.2px;border-radius:50%;background:#fff"></div>
<div class="t" style="left:1816.80px;top:686px;font-size:22px;line-height:29px;color:#20262e;letter-spacing:-0.492px;">Transparent</div>
<div class="a" style="left:1958px;top:679.9px;width:27.8px;height:28px;box-sizing:border-box;border-radius:50%;background:#fff;border:2px solid #cdcdcd;border-bottom-color:#bdbdbd"></div>
<div class="t" style="left:1994.60px;top:686px;font-size:22px;line-height:29px;color:#20262e;letter-spacing:-0.415px;">Redirect</div>
<div class="t" style="left:2215.57px;top:506px;font-size:22px;line-height:29px;color:#68717a;letter-spacing:-0.434px;-webkit-text-stroke:0.55px #68717a;">SSL/TLS Service Profile</div>
<div class="a" style="left:2674px;top:502px;width:40px;height:40px;box-sizing:border-box;border:2px solid #cfd2d5;border-top-color:#dfe1e3;border-left:1px solid #c6c9cd;border-radius:0 4px 4px 0;background:#fff"></div><div class="a" style="left:2453px;top:502px;width:221.5px;height:40px;box-sizing:border-box;border:2px solid #b3b6b9;border-right:0;border-radius:5px 4px 4px 5px;background:#fff"></div><svg style="left:2677.4px;top:514.9px" width="24" height="16"><path d="M3,3.3 L12,12.3 L21,3.3" fill="none" stroke="#979b9f" stroke-width="2.2"/></svg>
<div class="t" style="left:2463.00px;top:505px;font-size:22px;line-height:29px;color:#0a0a0a;letter-spacing:-0.148px;">None</div>
<div class="t" style="left:2228.56px;top:554px;font-size:22px;line-height:29px;color:#68717a;letter-spacing:0.263px;-webkit-text-stroke:0.55px #68717a;">Authentication Profile</div>
<div class="a" style="left:2674px;top:550px;width:40px;height:40px;box-sizing:border-box;border:2px solid #5aa9e0;border-top-color:#5aa9e0;border-left:1px solid #a5cff2;border-radius:0 4px 4px 0;background:#fff"></div><div class="a" style="left:2453px;top:550px;width:221.5px;height:40px;box-sizing:border-box;border:2px solid #3a8fdc;border-right:0;border-radius:5px 4px 4px 5px;background:#fff"></div><svg style="left:2677.4px;top:562.9px" width="24" height="16"><path d="M3,3.3 L12,12.3 L21,3.3" fill="none" stroke="#55a8e4" stroke-width="2.2"/></svg>
<div class="a" style="left:2463px;top:557px;width:49px;height:23px;background:#b5d5fb"></div>
<div class="t" style="left:2463.00px;top:553px;font-size:22px;line-height:29px;color:#2a3440;letter-spacing:-0.500px;transform:scaleX(0.9782);transform-origin:0 50%;">Local</div>
<div class="a" style="left:1370.6px;top:740px;width:1343px;height:93.5px;box-sizing:border-box;border:2px solid #bcc3ca;border-radius:7px"></div>
<div class="a" style="left:1384px;top:736px;width:277px;height:10px;background:#fff"></div>
<div class="t" style="left:1394.00px;top:726px;font-size:22px;line-height:29px;color:#4f5d6b;font-weight:700;letter-spacing:-0.380px;">Certificate Authentication</div>
<div class="t" style="left:1613.71px;top:776px;font-size:22px;line-height:29px;color:#68717a;letter-spacing:0.115px;-webkit-text-stroke:0.55px #68717a;">Certificate Profile</div>
<div class="a" style="left:2660px;top:772px;width:40px;height:40px;box-sizing:border-box;border:2px solid #cfd2d5;border-top-color:#dfe1e3;border-left:1px solid #c6c9cd;border-radius:0 4px 4px 0;background:#fff"></div><div class="a" style="left:1794px;top:772px;width:866.5px;height:40px;box-sizing:border-box;border:2px solid #b3b6b9;border-right:0;border-radius:5px 4px 4px 5px;background:#fff"></div><svg style="left:2663.4px;top:784.9px" width="24" height="16"><path d="M3,3.3 L12,12.3 L21,3.3" fill="none" stroke="#979b9f" stroke-width="2.2"/></svg>
<div class="t" style="left:1804.80px;top:775px;font-size:22px;line-height:29px;color:#0a0a0a;letter-spacing:-0.148px;">None</div>
<div class="a" style="left:2413.7px;top:894px;width:150.5px;height:55.8px;background:#4a9fe0;border-radius:28px"></div>
<div class="t" style="left:2473.40px;top:905px;font-size:23.2px;line-height:30px;color:#fff;letter-spacing:-0.500px;transform:scaleX(0.9749);transform-origin:0 50%;-webkit-text-stroke:0.4px #fff;">OK</div>
<div class="a" style="left:2576px;top:894px;width:149.6px;height:55.8px;box-sizing:border-box;background:#fff;border:2px solid #c9c9c9;border-radius:28px"></div>
<div class="t" style="left:2619.10px;top:905px;font-size:23.2px;line-height:30px;color:#1d2127;letter-spacing:-0.500px;transform:scaleX(0.9178);transform-origin:0 50%;">Cancel</div>
</div>
</body></html>
